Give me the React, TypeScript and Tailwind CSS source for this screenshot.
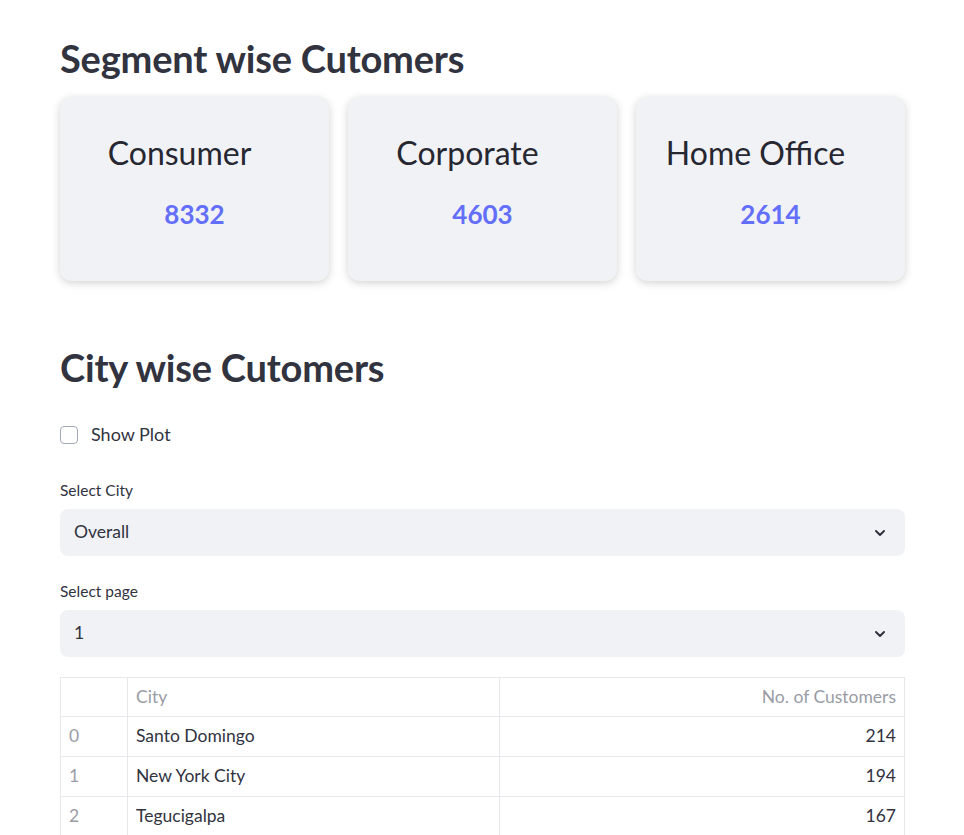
import { useState } from 'react'

const segments = [
  { name: 'Consumer', count: 8332 },
  { name: 'Corporate', count: 4603 },
  { name: 'Home Office', count: 2614 },
]

const rows = [
  { idx: 0, city: 'Santo Domingo', n: 214 },
  { idx: 1, city: 'New York City', n: 194 },
  { idx: 2, city: 'Tegucigalpa', n: 167 },
]

const Chevron = () => (
  <svg width="16" height="16" viewBox="0 0 24 24" fill="none" stroke="#31333f" strokeWidth="3" strokeLinecap="round" strokeLinejoin="round">
    <path d="M6 9l6 6 6-6" />
  </svg>
)

const SelectBox = ({ label, value }: { label: string; value: string }) => (
  <div className="flex flex-col">
    <label className="text-[15.5px] text-[#31333f] mb-[9px] leading-[20px]">{label}</label>
    <div className="h-[47px] bg-[#f0f2f6] rounded-[8px] flex items-center justify-between pl-[14px] pr-[17px] text-[17.5px] text-[#31333f]">
      <span>{value}</span>
      <Chevron />
    </div>
  </div>
)

export default function App() {
  const [showPlot, setShowPlot] = useState(false)

  return (
    <div className="min-h-screen bg-white" style={{ fontFamily: 'Lato, "Noto Sans", sans-serif' }}>
      <div className="w-[845px] ml-[60px] pt-[34px]">
        <h2 className="text-[38px] font-bold text-[#31333f] leading-[48px] tracking-[-0.2px]">Segment wise Cutomers</h2>
        <div className="grid grid-cols-3 gap-[19px] mt-[15px]">
          {segments.map((s) => (
            <div key={s.name} className="h-[184px] bg-[#f0f2f6] rounded-[12px] shadow-[0_2px_8px_rgba(0,0,0,0.18)] flex flex-col items-center pt-[36px]">
              <div className="text-[32px] text-[#262730] leading-[40px] pr-[30px]">{s.name}</div>
              <div className="text-[26px] font-bold text-[#636efa] leading-[34px] mt-[24px]">{s.count}</div>
            </div>
          ))}
        </div>

        <h2 className="text-[38px] font-bold text-[#31333f] leading-[48px] tracking-[-0.2px] mt-[62px]">City wise Cutomers</h2>

        <label className="flex items-center gap-[13px] mt-[30px] cursor-pointer select-none">
          <span
            onClick={() => setShowPlot(!showPlot)}
            className="w-[18px] h-[18px] rounded-[4px] border border-[#a3a8b8] bg-white"
          />
          <span className="text-[18px] text-[#31333f]">Show Plot</span>
        </label>

        <div className="mt-[32px]">
          <SelectBox label="Select City" value="Overall" />
        </div>
        <div className="mt-[25px]">
          <SelectBox label="Select page" value="1" />
        </div>

        <table className="w-full mt-[20px] border-collapse text-[17.5px]">
          <thead>
            <tr className="h-[39px]">
              <th className="w-[67px] border border-[#e6e8ec]"></th>
              <th className="w-[372px] border border-[#e6e8ec] text-left font-normal text-[#9a9ca5] px-[8px]">City</th>
              <th className="border border-[#e6e8ec] text-right font-normal text-[#9a9ca5] px-[8px]">No. of Customers</th>
            </tr>
          </thead>
          <tbody>
            {rows.map((r) => (
              <tr key={r.idx} className="h-[40px]">
                <td className="border border-[#e6e8ec] text-[#9a9ca5] px-[8px]">{r.idx}</td>
                <td className="border border-[#e6e8ec] text-[#31333f] px-[8px]">{r.city}</td>
                <td className="border border-[#e6e8ec] text-[#31333f] text-right px-[8px]">{r.n}</td>
              </tr>
            ))}
          </tbody>
        </table>
      </div>
    </div>
  )
}
